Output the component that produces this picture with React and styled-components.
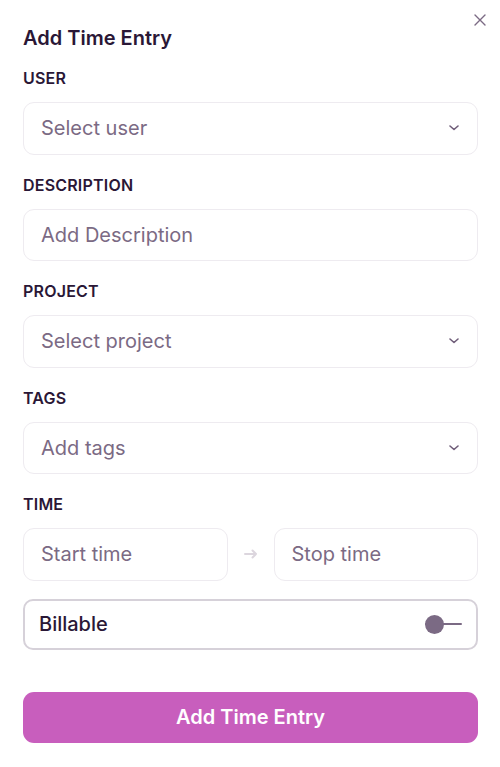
import React, { useState } from 'react'
import styled, { createGlobalStyle } from 'styled-components'

const Global = createGlobalStyle`
  body {
    margin: 0;
    background: #ffffff;
    font-family: Inter, "Noto Sans", sans-serif;
  }
`

const Modal = styled.div`
  position: relative;
  padding: 24px 22px 0 23px;
  display: flex;
  flex-direction: column;
`

const Close = styled.button`
  position: absolute;
  top: 13px;
  right: 13px;
  width: 14px;
  height: 14px;
  padding: 0;
  border: none;
  background: none;
  cursor: pointer;
  display: flex;
`

const Title = styled.h2`
  margin: 0 0 16px;
  font-size: 20px;
  line-height: 28px;
  font-weight: 600;
  color: #2a1736;
`

const Section = styled.div`
  display: flex;
  flex-direction: column;
  gap: 14px;
  margin-bottom: 20px;
`

const Label = styled.span`
  font-size: 16px;
  line-height: 20px;
  font-weight: 600;
  letter-spacing: 0.2px;
  color: #2a1736;
`

const Field = styled.div`
  height: 52.5px;
  box-sizing: border-box;
  border: 1.5px solid #eeebf0;
  border-radius: 11px;
  display: flex;
  align-items: center;
  justify-content: space-between;
  padding: 0 18px 0 17px;
  flex: ${(p) => (p.$grow ? 1 : 'none')};
`

const Placeholder = styled.span`
  font-size: 20px;
  color: #7b6a84;
`

const TimeRow = styled.div`
  display: flex;
  align-items: center;
`

const ArrowWrap = styled.div`
  width: 46px;
  display: flex;
  justify-content: center;
`

const Billable = styled.div`
  height: 51px;
  box-sizing: border-box;
  border: 2px solid #d6d1d9;
  border-radius: 10px;
  display: flex;
  align-items: center;
  justify-content: space-between;
  padding: 0 14px;
  margin-top: -2px;
`

const BillText = styled.span`
  font-size: 20px;
  font-weight: 500;
  color: #2a1736;
`

const Toggle = styled.button`
  position: relative;
  width: 37px;
  height: 20px;
  padding: 0;
  border: none;
  background: none;
  cursor: pointer;
  display: flex;
  align-items: center;
`

const Track = styled.span`
  display: block;
  width: 100%;
  height: 2px;
  border-radius: 1px;
  background: #7b6a84;
`

const Knob = styled.span`
  position: absolute;
  top: 1px;
  left: ${(p) => (p.$on ? '18px' : '0')};
  width: 19px;
  height: 19px;
  border-radius: 50%;
  background: #7b6a84;
`

const Submit = styled.button`
  margin-top: 42px;
  height: 51px;
  border: none;
  border-radius: 11px;
  background: #c85ebd;
  color: #ffffff;
  font-family: Inter, "Noto Sans", sans-serif;
  font-size: 20px;
  font-weight: 600;
  cursor: pointer;
`

const Chevron = () => (
  <svg width="10" height="6" viewBox="0 0 10 6" fill="none">
    <path d="M1 1l4 3.5L9 1" stroke="#6f5d79" strokeWidth="1.6" strokeLinecap="round" strokeLinejoin="round" />
  </svg>
)

const fields = [
  { label: 'USER', text: 'Select user', select: true },
  { label: 'DESCRIPTION', text: 'Add Description', select: false },
  { label: 'PROJECT', text: 'Select project', select: true },
  { label: 'TAGS', text: 'Add tags', select: true },
]

const App = () => {
  const [billable, setBillable] = useState(false)

  return (
    <>
      <Global />
      <Modal>
        <Close aria-label="close">
          <svg width="14" height="14" viewBox="0 0 14 14">
            <path d="M2 2l10 10M12 2L2 12" stroke="#7b6a84" strokeWidth="1.4" strokeLinecap="round" />
          </svg>
        </Close>
        <Title>Add Time Entry</Title>

        {fields.map((f) => (
          <Section key={f.label}>
            <Label>{f.label}</Label>
            <Field>
              <Placeholder>{f.text}</Placeholder>
              {f.select && <Chevron />}
            </Field>
          </Section>
        ))}

        <Section>
          <Label>TIME</Label>
          <TimeRow>
            <Field $grow>
              <Placeholder>Start time</Placeholder>
            </Field>
            <ArrowWrap>
              <svg width="14" height="10" viewBox="0 0 14 10" fill="none">
                <path d="M1 5h11M8.5 1.5L12 5l-3.5 3.5" stroke="#dcd6de" strokeWidth="2" strokeLinecap="round" strokeLinejoin="round" />
              </svg>
            </ArrowWrap>
            <Field $grow>
              <Placeholder>Stop time</Placeholder>
            </Field>
          </TimeRow>
        </Section>

        <Billable>
          <BillText>Billable</BillText>
          <Toggle onClick={() => setBillable(!billable)} aria-label="billable">
            <Track />
            <Knob $on={billable} />
          </Toggle>
        </Billable>

        <Submit>Add Time Entry</Submit>
      </Modal>
    </>
  )
}

export default App
